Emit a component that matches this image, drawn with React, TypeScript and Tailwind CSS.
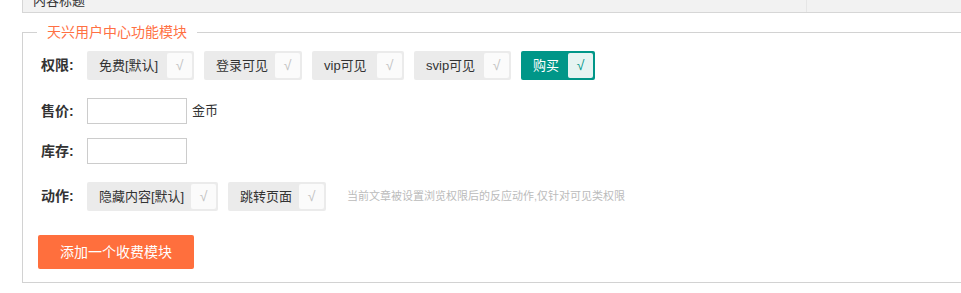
import React from "react";

const FONT = { fontFamily: '"Liberation Sans", "Noto Sans CJK SC", sans-serif' };

function Check({ label, width, checked = false }: { label: string; width: number; checked?: boolean }) {
  return (
    <div
      className={`flex h-[29px] items-center justify-between rounded-[2px] pl-[12px] pr-[2px] text-[13px] ${
        checked ? "bg-[#009688] text-white" : "bg-[#ebebeb] text-[#333]"
      }`}
      style={{ width }}
    >
      <span className="whitespace-nowrap">{label}</span>
      <span
        className={`flex h-[25px] w-[25px] items-center justify-center rounded-[2px] text-[14px] ${
          checked ? "bg-[#e6f4f2] text-[#009688]" : "bg-[#fbfbfb] text-[#c2c2c2]"
        }`}
      >
        √
      </span>
    </div>
  );
}

function Label({ children }: { children: React.ReactNode }) {
  return <div className="w-[46px] shrink-0 text-[14px] font-bold text-[#333]">{children}</div>;
}

export default function App() {
  return (
    <div className="h-[293px] w-[961px] overflow-hidden bg-white" style={FONT}>
      <div className="ml-[22px] flex h-[13px] w-[1000px] overflow-hidden border-b border-l border-[#d6d6d6] bg-[#f2f2f2]">
        <div className="w-[784px] border-r border-[#e6e6e6] pl-[10px] text-[13px] leading-[2px] text-[#333]">内容标题</div>
        <div className="flex-1" />
      </div>
      <fieldset className="ml-[22px] mt-[9px] h-[261px] w-[1000px] border border-[#d2d2d2] pl-[18px]">
        <legend className="ml-[-4px] px-[10px] text-[14px] leading-[20px] text-[#ff7043]">天兴用户中心功能模块</legend>
        <div className="mt-[9px] flex items-center">
          <Label>权限:</Label>
          <div className="flex gap-[10px]">
            <Check label="免费[默认]" width={107} />
            <Check label="登录可见" width={98} />
            <Check label="vip可见" width={92} />
            <Check label="svip可见" width={97} />
            <Check label="购买" width={74} checked />
          </div>
        </div>
        <div className="mt-[18px] flex items-center">
          <Label>售价:</Label>
          <input className="h-[26px] w-[100px] border border-[#ccc] px-2 text-[13px] outline-none" />
          <span className="ml-[5px] text-[13px] text-[#333]">金币</span>
        </div>
        <div className="mt-[14px] flex items-center">
          <Label>库存:</Label>
          <input className="h-[26px] w-[100px] border border-[#ccc] px-2 text-[13px] outline-none" />
        </div>
        <div className="mt-[18px] flex items-center">
          <Label>动作:</Label>
          <div className="flex gap-[10px]">
            <Check label="隐藏内容[默认]" width={131} />
            <Check label="跳转页面" width={98} />
          </div>
          <span className="ml-[21px] text-[11px] text-[#bbb]">当前文章被设置浏览权限后的反应动作,仅针对可见类权限</span>
        </div>
        <button className="ml-[-3px] mt-[24px] h-[34px] w-[156px] rounded-[2px] bg-[#ff6f3d] text-[14px] text-white">
          添加一个收费模块
        </button>
      </fieldset>
    </div>
  );
}
